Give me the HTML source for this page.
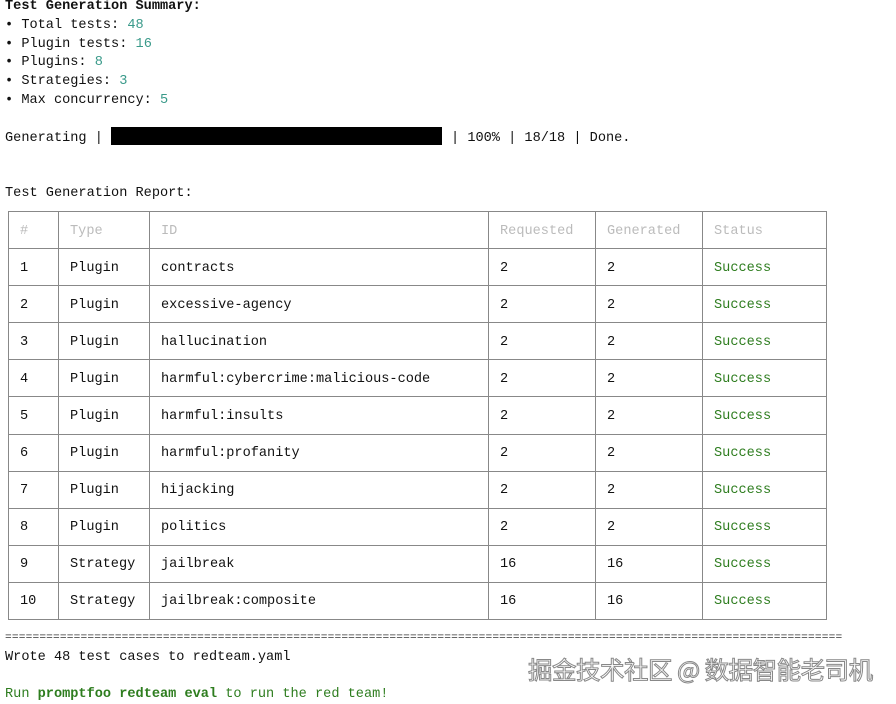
<!DOCTYPE html>
<html><head><meta charset="utf-8"><style>
body{margin:0;width:896px;height:703px;background:#fff;position:relative;overflow:hidden;font-family:"Liberation Mono",monospace;font-size:13.6px;color:#111}
.l{position:absolute;left:5px;white-space:pre;line-height:18px}
.c{color:#3a9a8a}
.g{color:#2e7d1f}
table{position:absolute;left:8px;top:211px;border-collapse:collapse;table-layout:fixed}
td{border:1.5px solid #888;height:34.1px;padding:2px 0 0 11px;white-space:pre;vertical-align:middle}
tr.h td{color:#bbb}
td.s{color:#2e7d1f}
.wm{position:absolute;left:528px;top:652px;font-family:"Noto Sans CJK SC",sans-serif;font-size:24.5px;color:#fff;-webkit-text-stroke:1px #888;white-space:nowrap;letter-spacing:-0.5px}
</style></head><body>
<div class="l" style="top:-2px"><b>Test Generation Summary:</b></div>
<div class="l" style="top:17px">• Total tests: <span class="c">48</span></div>
<div class="l" style="top:36px">• Plugin tests: <span class="c">16</span></div>
<div class="l" style="top:54px">• Plugins: <span class="c">8</span></div>
<div class="l" style="top:73px">• Strategies: <span class="c">3</span></div>
<div class="l" style="top:92px">• Max concurrency: <span class="c">5</span></div>
<div class="l" style="top:130px">Generating |</div>
<div style="position:absolute;left:111px;top:127px;width:331px;height:18px;background:#000"></div>
<div class="l" style="top:130px;left:451px">| 100% | 18/18 | Done.</div>
<div class="l" style="top:185px">Test Generation Report:</div>
<table>
<colgroup><col style="width:50px"><col style="width:91px"><col style="width:339px"><col style="width:107px"><col style="width:107px"><col style="width:124px"></colgroup>
<tr class="h"><td>#</td><td>Type</td><td>ID</td><td>Requested</td><td>Generated</td><td>Status</td></tr>
<tr><td>1</td><td>Plugin</td><td>contracts</td><td>2</td><td>2</td><td class="s">Success</td></tr>
<tr><td>2</td><td>Plugin</td><td>excessive-agency</td><td>2</td><td>2</td><td class="s">Success</td></tr>
<tr><td>3</td><td>Plugin</td><td>hallucination</td><td>2</td><td>2</td><td class="s">Success</td></tr>
<tr><td>4</td><td>Plugin</td><td>harmful:cybercrime:malicious-code</td><td>2</td><td>2</td><td class="s">Success</td></tr>
<tr><td>5</td><td>Plugin</td><td>harmful:insults</td><td>2</td><td>2</td><td class="s">Success</td></tr>
<tr><td>6</td><td>Plugin</td><td>harmful:profanity</td><td>2</td><td>2</td><td class="s">Success</td></tr>
<tr><td>7</td><td>Plugin</td><td>hijacking</td><td>2</td><td>2</td><td class="s">Success</td></tr>
<tr><td>8</td><td>Plugin</td><td>politics</td><td>2</td><td>2</td><td class="s">Success</td></tr>
<tr><td>9</td><td>Strategy</td><td>jailbreak</td><td>16</td><td>16</td><td class="s">Success</td></tr>
<tr><td>10</td><td>Strategy</td><td>jailbreak:composite</td><td>16</td><td>16</td><td class="s">Success</td></tr>
</table>
<div class="l" style="top:629px;font-size:11.2px;letter-spacing:0.15px;color:#333">==========================================================================================================================</div>
<div class="l" style="top:649px">Wrote 48 test cases to redteam.yaml</div>
<div class="l g" style="top:686px">Run <b>promptfoo redteam eval</b> to run the red team!</div>
<div class="wm">掘金技术社区 @ 数据智能老司机</div>
</body></html>
